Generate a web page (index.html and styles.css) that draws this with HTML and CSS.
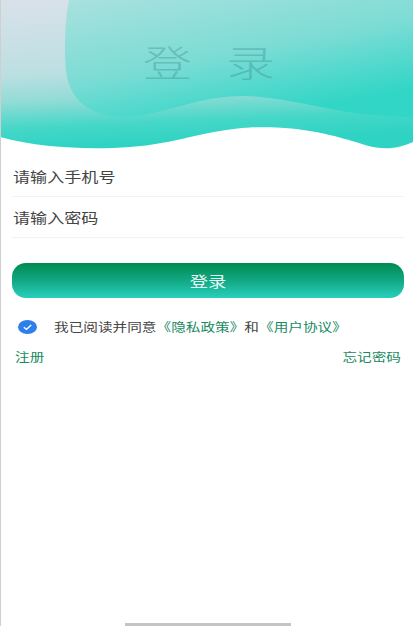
FILE: index.html
```html
<!DOCTYPE html>
<html lang="zh">
<head>
<meta charset="utf-8">
<title>登录</title>
<link rel="stylesheet" href="styles.css">
</head>
<body>
<main class="page">
  <header class="hero">
    <svg class="hero-art" viewBox="0 0 413 150" width="413" height="150" aria-hidden="true">
      <defs>
        <linearGradient id="outer" x1="0" y1="0" x2="0.12" y2="1">
          <stop offset="0" stop-color="#d9e1ea"/>
          <stop offset="0.5" stop-color="#bcdfe2"/>
          <stop offset="0.68" stop-color="#92dcd6"/>
          <stop offset="0.86" stop-color="#45d7c8"/>
          <stop offset="1" stop-color="#2ed3c3"/>
        </linearGradient>
        <linearGradient id="inner" x1="0" y1="0" x2="0.55" y2="1">
          <stop offset="0" stop-color="#a9e1de"/>
          <stop offset="0.55" stop-color="#7cdcd5"/>
          <stop offset="0.85" stop-color="#4ad8cb"/>
          <stop offset="1" stop-color="#32d6c6"/>
        </linearGradient>
      </defs>
      <path fill="url(#outer)" d="M0 137 C40 148 90 150 130 147 C175 144 205 130 250 127.500 C300 126 330 134 365 145 C385 151 400 148 413 142 L413 0 L0 0 Z"/>
      <path fill="url(#inner)" d="M69 0 C65 20 64 50 66 70 C69 100 90 117 125 117 C170 114 195 96 245 96 C295 97 340 117 413 117 L413 0 Z"/>
    </svg>
    <h1 class="title">登 录</h1>
  </header>
  <section class="form">
    <div class="field"><span class="wide">请输入手机号</span></div>
    <div class="field"><span class="wide">请输入密码</span></div>
    <button class="submit" type="button"><span class="wide-center">登录</span></button>
    <div class="agree">
      <svg class="check" viewBox="0 0 19 14" width="19" height="14" aria-hidden="true">
        <ellipse cx="9.500" cy="7" rx="9.500" ry="7" fill="#2f7fea"/>
        <path d="M5.800 7.200 L8.500 9.300 L13.200 5" fill="none" stroke="#fff" stroke-width="1.300"/>
      </svg>
      <p class="agree-text wide">我已阅读并同意<a class="link">《隐私政策》</a>和<a class="link">《用户协议》</a></p>
    </div>
    <div class="links">
      <a class="link wide">注册</a>
      <a class="link wide-right">忘记密码</a>
    </div>
  </section>
  <div class="home-bar"></div>
</main>
</body>
</html>
```
FILE: styles.css
```css
* { box-sizing: border-box; }
html, body { margin: 0; padding: 0; background: #fff; }
body { font-family: "Noto Sans CJK SC", "Noto Sans", sans-serif; }
.page {
  position: relative;
  width: 413px;
  height: 626px;
  overflow: hidden;
  background: #fff;
  border-left: 1px solid #cfcfcf;
}
.hero { position: relative; height: 156px; margin-left: -1px; }
.hero-art { display: block; }
.title {
  position: absolute;
  top: 38px;
  left: 143px;
  margin: 0;
  font-size: 36px;
  line-height: 46px;
  font-weight: 300;
  letter-spacing: 8.500px;
  color: rgba(60, 140, 140, 0.4);
  white-space: nowrap;
  transform: scaleX(1.36);
  transform-origin: left center;
}
.wide, .wide-center, .wide-right { display: inline-block; transform: scaleX(1.22); }
.wide { transform-origin: left center; }
.wide-center { transform-origin: center; }
.wide-right { transform-origin: right center; }
.form { padding: 0 9px 0 11px; display: flex; flex-direction: column; }
.field {
  height: 41px;
  padding: 0 0 0 1px;
  display: flex;
  align-items: center;
  font-size: 14px;
  color: #444;
  border-bottom: 1px solid #f2f2f2;
}
.submit {
  margin-top: 25px;
  height: 35px;
  border: 0;
  border-radius: 14px;
  background: linear-gradient(180deg, #008a50 0%, #12a884 50%, #28d0bc 100%);
  color: #e8f8f2;
  font: inherit;
  font-size: 15px;
}
.agree { display: flex; align-items: center; margin-top: 20px; padding-left: 6px; }
.agree-text {
  margin: 0 0 0 17px;
  font-size: 12px;
  line-height: 18px;
  color: #444;
  white-space: nowrap;
}
.link { color: #1a8a62; }
.links {
  display: flex;
  justify-content: space-between;
  margin-top: 12px;
  padding: 0 3px 0 3px;
  font-size: 12px;
  line-height: 18px;
}
.home-bar {
  position: absolute;
  left: 124px;
  bottom: 0;
  width: 166px;
  height: 3px;
  background: #c4c4c4;
}
```
